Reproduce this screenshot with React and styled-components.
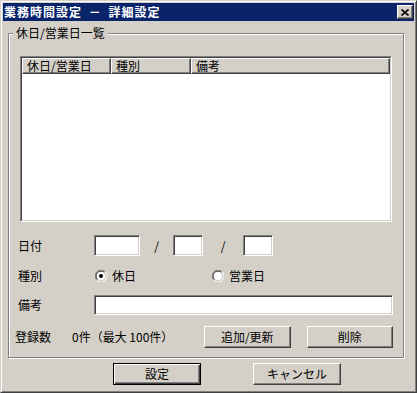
import React, { useState } from 'react'
import styled, { createGlobalStyle } from 'styled-components'

const face = '#D4D0C8'

const Global = createGlobalStyle`
    html, body {
        margin: 0;
        padding: 0;
        background: ${face};
    }
    body {
        font-family: "Noto Sans CJK JP", "Noto Sans", sans-serif;
        font-size: 12px;
        color: #000;
    }
`

const Window = styled.div`
    width: 417px;
    height: 393px;
    box-sizing: border-box;
    background: ${face};
    border: 1px solid;
    border-color: ${face} #404040 #404040 ${face};
    box-shadow: inset 1px 1px #fff, inset -1px -1px #808080;
    padding: 2px;
    display: flex;
    flex-direction: column;
`

const TitleBar = styled.div`
    height: 18px;
    background: #0A246A;
    color: #fff;
    font-weight: bold;
    font-size: 12px;
    line-height: 18px;
    display: flex;
    align-items: center;
    padding: 0 1px;
`

const TitleText = styled.span`
    flex: 1;
    letter-spacing: 1px;
    word-spacing: 3px;
    white-space: pre;
`

const CloseBtn = styled.div`
    width: 16px;
    height: 14px;
    box-sizing: border-box;
    background: ${face};
    border: 1px solid;
    border-color: #fff #404040 #404040 #fff;
    box-shadow: inset -1px -1px #808080;
    display: flex;
    align-items: center;
    justify-content: center;
`

const Body = styled.div`
    padding: 12px 10px 0 5px;
`

const Group = styled.div`
    position: relative;
    border: 1px solid #808080;
    box-shadow: 1px 1px 0 #fff, inset 1px 1px 0 #fff;
    padding: 22px 10px 9px 11px;
`

const Legend = styled.span`
    position: absolute;
    top: -8px;
    left: 4px;
    padding: 0 3px;
    line-height: 14px;
    background: ${face};
`

const ListOuter = styled.div`
    width: 372px;
    height: 166px;
    box-sizing: border-box;
    border: 1px solid;
    border-color: #808080 #fff #fff #808080;
`

const ListInner = styled.div`
    height: 100%;
    box-sizing: border-box;
    border: 1px solid;
    border-color: #404040 ${face} ${face} #404040;
    background: #fff;
`

const Header = styled.div`
    display: flex;
    height: 16px;
`

const HeadCell = styled.div`
    width: ${p => p.$w ? `${p.$w}px` : 'auto'};
    flex: ${p => p.$w ? 'none' : 1};
    box-sizing: border-box;
    background: ${face};
    border: 1px solid;
    border-color: #fff #404040 #404040 #fff;
    box-shadow: inset -1px -1px #808080;
    padding-left: 4px;
    line-height: 13px;
    white-space: nowrap;
    overflow: hidden;
`

const Row = styled.div`
    display: flex;
    align-items: center;
    height: ${p => p.$h}px;
    margin-top: ${p => p.$mt}px;
    margin-left: ${p => p.$ml}px;
`

const Label = styled.span`
    width: ${p => p.$w}px;
    flex: none;
    line-height: 14px;
    white-space: nowrap;
`

const Edit = styled.input`
    width: ${p => p.$w}px;
    height: ${p => p.$h || 21}px;
    box-sizing: border-box;
    margin: 0;
    padding: 0 2px;
    background: #fff;
    border: 1px solid;
    border-color: #808080 #fff #fff #808080;
    box-shadow: inset 1px 1px #404040, inset -1px -1px ${face};
    font: inherit;
    outline: none;
`

const Slash = styled.span`
    width: ${p => p.$w}px;
    text-align: center;
    line-height: 14px;
`

const RadioOpt = styled.label`
    width: ${p => p.$w ? `${p.$w}px` : 'auto'};
    display: flex;
    align-items: center;
    gap: 5px;
    line-height: 14px;
    cursor: default;
`

const Count = styled.span`
    width: 132px;
    flex: none;
    line-height: 14px;
`

const Button = styled.button`
    width: 88px;
    height: 22px;
    box-sizing: border-box;
    margin: 0 0 0 ${p => p.$ml || 0}px;
    padding: 0;
    background: ${face};
    font: inherit;
    color: #000;
    border: 1px solid;
    border-color: ${p => p.$default ? '#000' : '#fff #404040 #404040 #fff'};
    box-shadow: ${p => p.$default
        ? 'inset 1px 1px #fff, inset -1px -1px #404040, inset -2px -2px #808080'
        : 'inset -1px -1px #808080'};
    line-height: 14px;
`

const Footer = styled.div`
    display: flex;
    gap: 52px;
    padding-left: 110px;
    margin-top: 5px;
`

const Radio = ({ checked }) => (
    <svg width="12" height="12" viewBox="0 0 12 12">
        <path d="M10.2 1.8 A5.9 5.9 0 0 0 1.8 10.2" stroke="#808080" fill="none" />
        <path d="M1.8 10.2 A5.9 5.9 0 0 0 10.2 1.8" stroke="#fff" fill="none" />
        <path d="M9.5 2.5 A4.9 4.9 0 0 0 2.5 9.5" stroke="#404040" fill="none" />
        <path d="M2.5 9.5 A4.9 4.9 0 0 0 9.5 2.5" stroke={face} fill="none" />
        <circle cx="6" cy="6" r="4" fill="#fff" />
        {checked && <circle cx="6" cy="6" r="2" fill="#000" />}
    </svg>
)

export default function App() {
    const [kind, setKind] = useState('holiday')

    return (
        <>
            <Global />
            <Window>
                <TitleBar>
                    <TitleText>業務時間設定 － 詳細設定</TitleText>
                    <CloseBtn>
                        <svg width="8" height="7" viewBox="0 0 8 7">
                            <path d="M0.5 0.5 L7.5 6.5 M7.5 0.5 L0.5 6.5" stroke="#000" strokeWidth="1.6" />
                        </svg>
                    </CloseBtn>
                </TitleBar>
                <Body>
                    <Group>
                        <Legend>休日/営業日一覧</Legend>
                        <ListOuter>
                            <ListInner>
                                <Header>
                                    <HeadCell $w={89}>休日/営業日</HeadCell>
                                    <HeadCell $w={80}>種別</HeadCell>
                                    <HeadCell>備考</HeadCell>
                                </Header>
                            </ListInner>
                        </ListOuter>
                        <Row $h={21} $mt={13} $ml={-2}>
                            <Label $w={76}>日付</Label>
                            <Edit $w={46} />
                            <Slash $w={33}>/</Slash>
                            <Edit $w={30} />
                            <Slash $w={40}>/</Slash>
                            <Edit $w={30} />
                        </Row>
                        <Row $h={13} $mt={13} $ml={-2}>
                            <Label $w={77}>種別</Label>
                            <RadioOpt $w={117} onClick={() => setKind('holiday')}>
                                <Radio checked={kind === 'holiday'} />休日
                            </RadioOpt>
                            <RadioOpt onClick={() => setKind('business')}>
                                <Radio checked={kind === 'business'} />営業日
                            </RadioOpt>
                        </Row>
                        <Row $h={20} $mt={13} $ml={-2}>
                            <Label $w={76}>備考</Label>
                            <Edit $w={300} $h={20} />
                        </Row>
                        <Row $h={22} $mt={11} $ml={-5}>
                            <Label $w={57}>登録数</Label>
                            <Count>0件（最大 100件）</Count>
                            <Button>追加/更新</Button>
                            <Button $ml={16}>削除</Button>
                        </Row>
                    </Group>
                </Body>
                <Footer>
                    <Button $default>設定</Button>
                    <Button>キャンセル</Button>
                </Footer>
            </Window>
        </>
    )
}
